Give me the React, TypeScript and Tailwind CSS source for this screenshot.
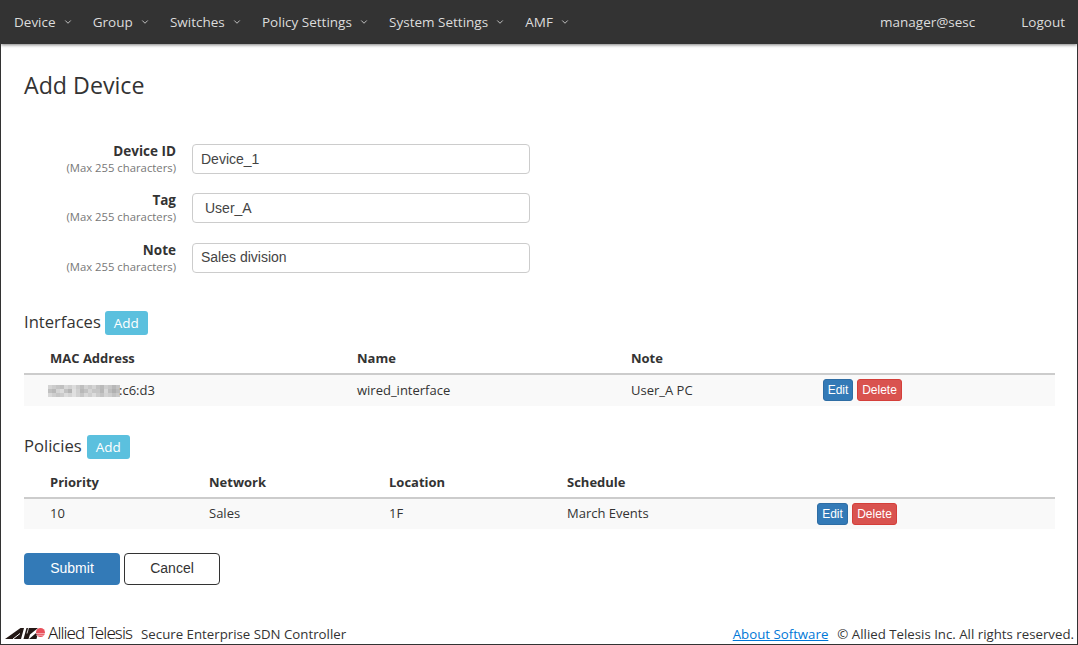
import React from "react";
import { ChevronDown } from "lucide-react";

const menus = ["Device", "Group", "Switches", "Policy Settings", "System Settings", "AMF"];

const fields = [
    { label: "Device ID", value: "Device_1", extra: "" },
    { label: "Tag", value: "User_A", extra: "pl-[12px]" },
    { label: "Note", value: "Sales division", extra: "" },
];

// mosaic that hides the first part of the MAC address
const mosaic = [
    "d4ccc4c0d8d0dccbbed2c8d4c2bacec6b8c4",
    "c0b8d4dcc2b4e0d0b8c2d4c6c6b8d8beb0bc",
    "d8cec6ccdcd4e0d2c6d8cedcccc4d4cec2ca",
];

const BlurredMac: React.FC = () => (
    <svg width="72" height="12" viewBox="0 0 72 12" className="inline-block align-middle">
        {mosaic.map((row, y) =>
            Array.from({ length: 18 }).map((_, x) => {
                const g = row.slice(x * 2, x * 2 + 2);
                return <rect key={y + "-" + x} x={x * 4} y={y * 4} width="4" height="4" fill={"#" + g + g + g} />;
            })
        )}
    </svg>
);

const RowButtons: React.FC<{ wide?: boolean }> = ({ wide }) => (
    <div className="flex gap-[4px] font-['Liberation_Sans',sans-serif] text-[12px] text-white">
        <button className={"h-[22px] rounded-[3px] border border-[#2e6da4] bg-[#337ab7] " + (wide ? "w-[31px]" : "w-[30px]")}>Edit</button>
        <button className="h-[22px] w-[45px] rounded-[3px] border border-[#d43f3a] bg-[#d9534f]">Delete</button>
    </div>
);

const Logo: React.FC = () => (
    <div className="-mt-[3px] flex items-center">
        <svg width="40" height="11" viewBox="0 0 40 11" className="ml-[1px]">
            <path d="M0 11 L15.5 0 H19 L16 11 Z" fill="#231815" />
            <path d="M8 11 L15 5.5" stroke="#fff" strokeWidth="1" />
            <path d="M18.5 11 L21.5 0 H33 L25 6.5 L23.5 11 Z" fill="#231815" />
            <path d="M24 11 L33.5 3 L31.5 11 Z" fill="#231815" />
            <path d="M23.5 0 L22 5.5" stroke="#fff" strokeWidth="0.8" />
            <circle cx="35.5" cy="4.5" r="4.5" fill="#e8505b" />
            <path d="M31 5.5 H40 M31 7.3 H40" stroke="#fff" strokeWidth="0.5" />
        </svg>
        <span className="ml-[3px] font-['Noto_Sans',sans-serif] text-[17px] font-light leading-[20px] tracking-[-0.9px] text-[#231815]">Allied Telesis</span>
    </div>
);

const App: React.FC = () => {
    return (
        <div className="flex h-[645px] w-[1078px] flex-col overflow-hidden border-x border-b border-[#333] bg-white font-['Open_Sans',sans-serif] text-[#333]">
            <nav className="flex h-[44px] shrink-0 items-center bg-[#333] pl-[13px] pr-[12px] text-[13.5px] text-[#dcdcdc] shadow-[0_1px_3px_rgba(0,0,0,0.5)]">
                {menus.map((m) => (
                    <div key={m} className="mr-[20.2px] flex items-center gap-[7px]">
                        <span>{m}</span>
                        <ChevronDown size={10} />
                    </div>
                ))}
                <span className="ml-auto">manager@sesc</span>
                <span className="ml-[46px]">Logout</span>
            </nav>

            <main className="flex flex-1 flex-col px-[23px]">
                <h1 className="mt-[25px] text-[23.2px] leading-[32px]">Add Device</h1>

                <div className="mt-[43px] flex flex-col gap-[17.4px]">
                    {fields.map((f) => (
                        <div key={f.label} className="flex items-start">
                            <div className="w-[152px] text-right">
                                <div className="text-[13.5px] font-bold leading-[15px]">{f.label}</div>
                                <div className="text-[11.3px] leading-[17px] text-[#777]">(Max 255 characters)</div>
                            </div>
                            <div className={"ml-[16px] flex h-[30px] w-[338px] items-center rounded-[4px] border border-[#ccc] px-[8px] font-['Liberation_Sans',sans-serif] text-[14px] text-[#444] " + f.extra}>
                                {f.value}
                            </div>
                        </div>
                    ))}
                </div>

                <div className="mt-[36.2px] flex items-center gap-[4px]">
                    <h2 className="-mt-[2px] text-[16.6px] leading-[24px]">Interfaces</h2>
                    <button className="h-[24px] rounded-[3px] bg-[#5bc0de] px-[9px] text-[13.5px] text-white">Add</button>
                </div>
                <table className="mt-[9px] w-[1031px] table-fixed text-[13px]">
                    <thead>
                        <tr className="h-[30px] border-b-2 border-[#ccc] text-left">
                            <th className="w-[333px] pl-[26px]">MAC Address</th>
                            <th className="w-[274px] font-bold">Name</th>
                            <th className="w-[192px]">Note</th>
                            <th></th>
                        </tr>
                    </thead>
                    <tbody>
                        <tr className="h-[32px] bg-[#f9f9f9]">
                            <td className="pl-[24px]">
                                <BlurredMac />
                                <span className="-ml-[1px] align-middle">:c6:d3</span>
                            </td>
                            <td>wired_interface</td>
                            <td>User_A PC</td>
                            <td><RowButtons /></td>
                        </tr>
                    </tbody>
                </table>

                <div className="mt-[29px] flex items-center gap-[5px]">
                    <h2 className="-mt-[2px] text-[16.6px] leading-[24px]">Policies</h2>
                    <button className="h-[24px] rounded-[3px] bg-[#5bc0de] px-[9px] text-[13.5px] text-white">Add</button>
                </div>
                <table className="mt-[9px] w-[1031px] table-fixed text-[13px]">
                    <thead>
                        <tr className="h-[30px] border-b-2 border-[#ccc] text-left">
                            <th className="w-[185px] pl-[26px]">Priority</th>
                            <th className="w-[180px]">Network</th>
                            <th className="w-[178px]">Location</th>
                            <th className="w-[250px]">Schedule</th>
                            <th></th>
                        </tr>
                    </thead>
                    <tbody>
                        <tr className="h-[31px] bg-[#f9f9f9]">
                            <td className="pl-[26px]">10</td>
                            <td>Sales</td>
                            <td>1F</td>
                            <td>March Events</td>
                            <td><RowButtons wide /></td>
                        </tr>
                    </tbody>
                </table>

                <div className="mt-[24px] flex gap-[4px] font-['Liberation_Sans',sans-serif] text-[14px]">
                    <button className="h-[32px] w-[96px] rounded-[4px] bg-[#337ab7] text-white">Submit</button>
                    <button className="h-[32px] w-[96px] rounded-[4px] border border-[#333] bg-white">Cancel</button>
                </div>
            </main>

            <footer className="flex h-[24px] shrink-0 items-center pl-[3px] pr-[3px] pt-[5px] text-[13.25px]">
                <Logo />
                <span className="ml-[9px]">Secure Enterprise SDN Controller</span>
                <a className="ml-auto text-[#0078d7] underline">About Software</a>
                <span className="ml-[9px]">© Allied Telesis Inc. All rights reserved.</span>
            </footer>
        </div>
    );
};

export default App;
